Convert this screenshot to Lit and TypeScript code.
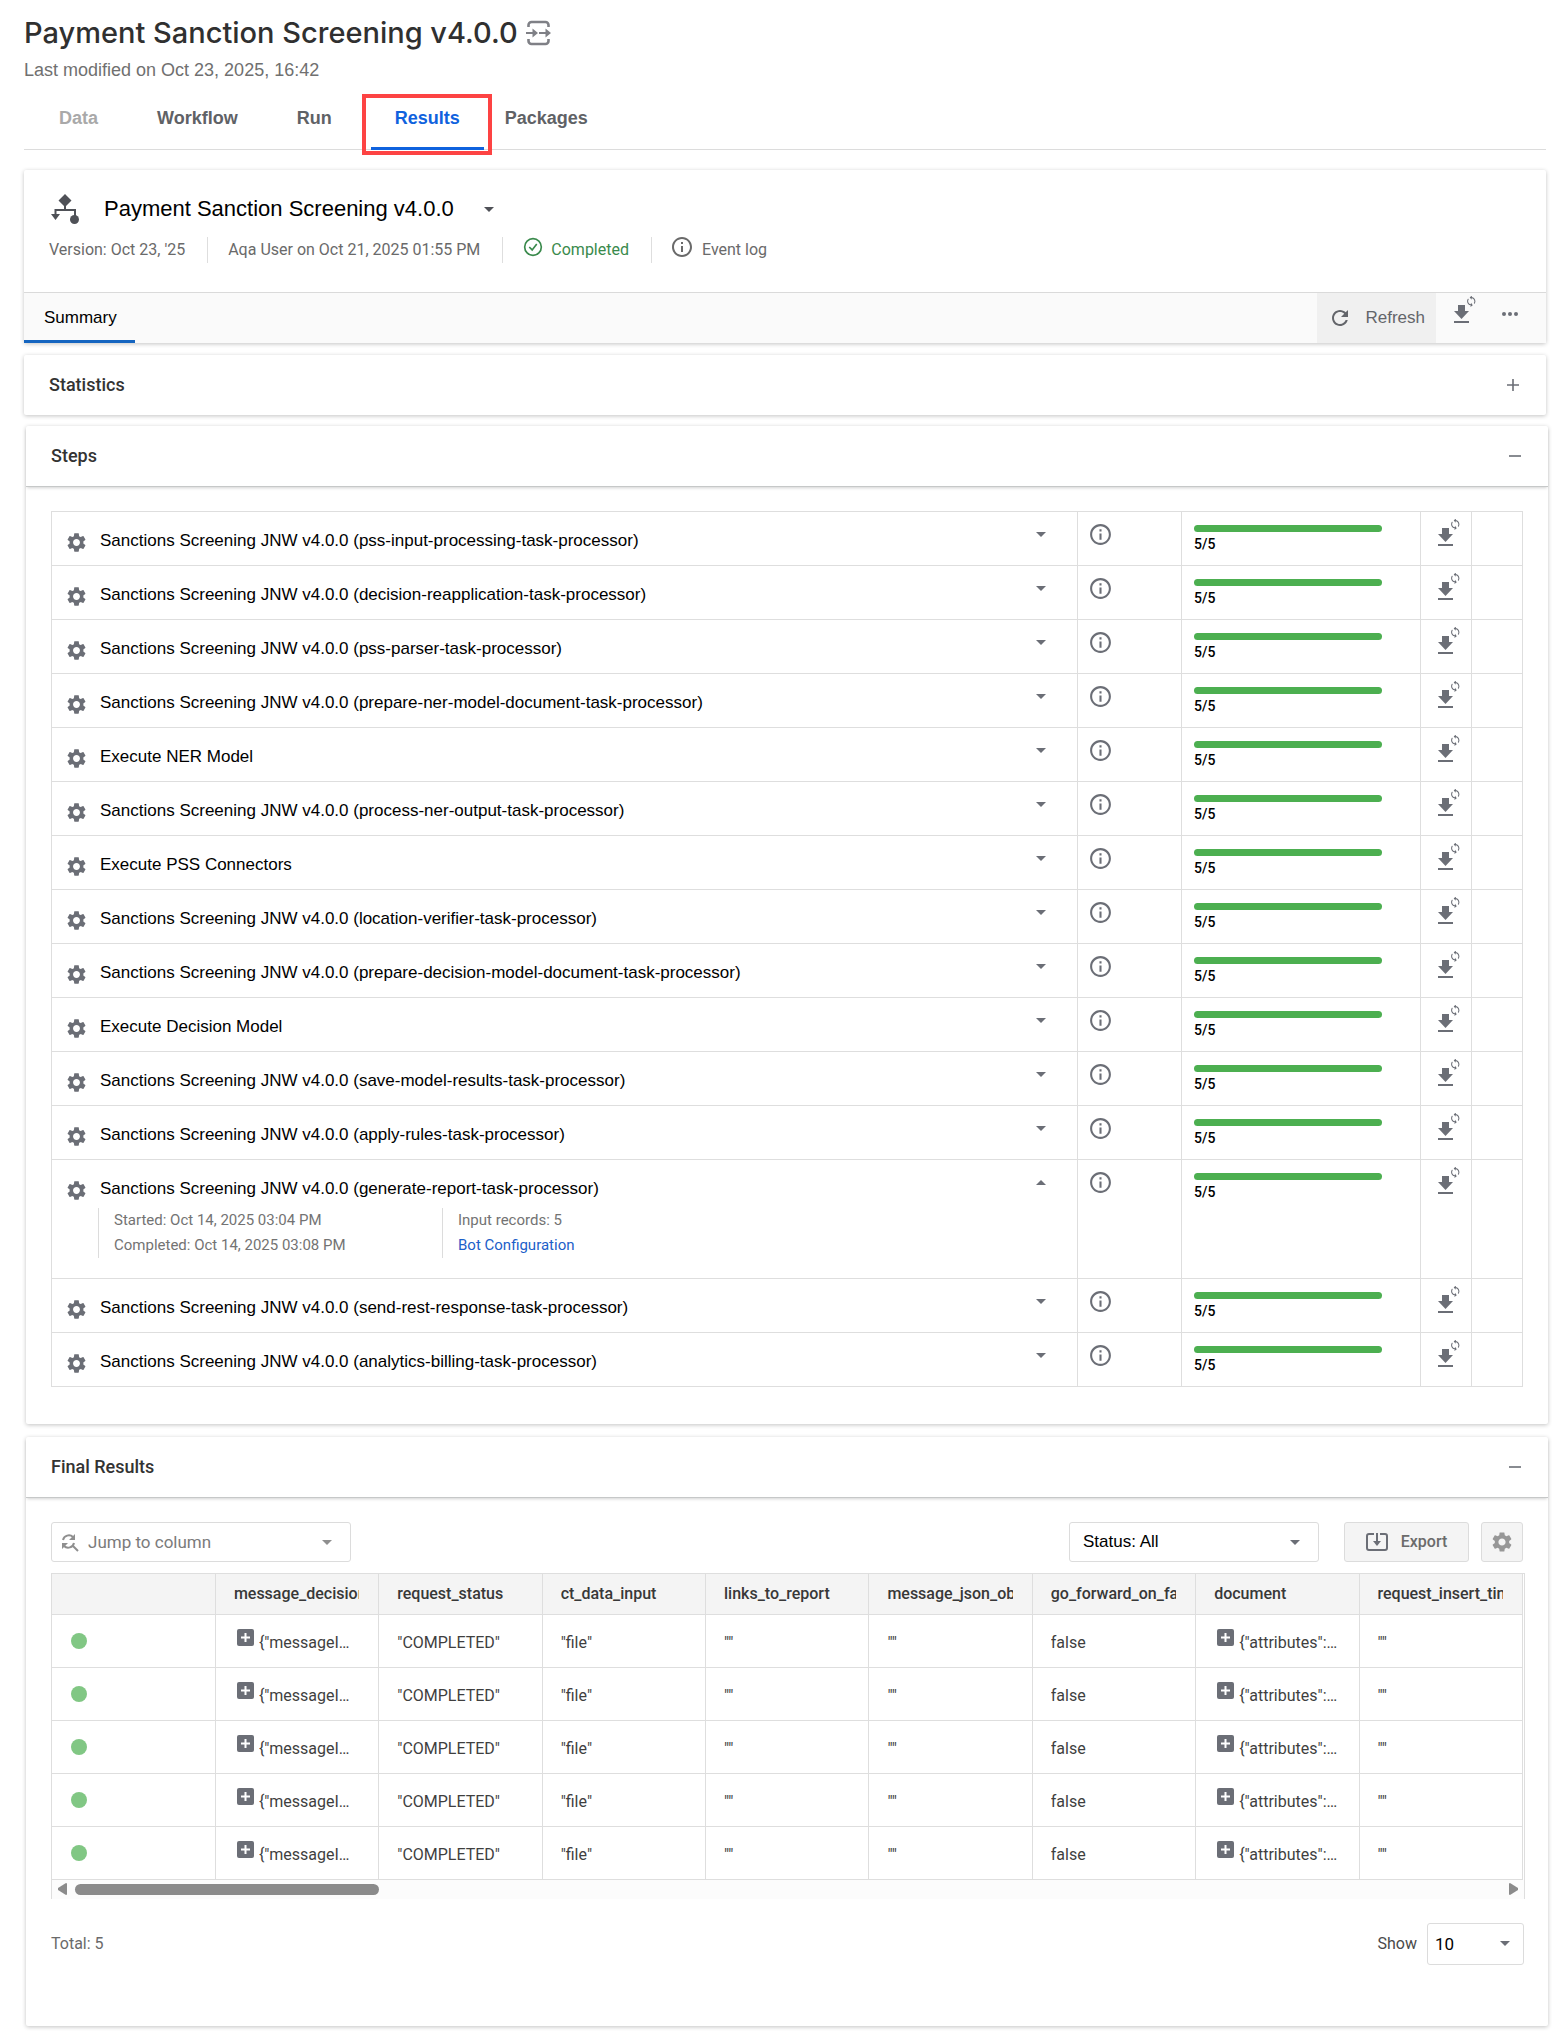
import { LitElement, html, css, svg, nothing } from "lit";
import { customElement } from "lit/decorators.js";

const svgIcon = (size: number, body: unknown, box = 24, cls = "icon") => html`<svg
  class=${cls} width=${size} height=${size} viewBox="0 0 ${box} ${box}" aria-hidden="true">${body}</svg>`;

const GEAR = svg`<path fill="currentColor" d="M19.14 12.94c.04-.3.06-.61.06-.94 0-.32-.02-.64-.07-.94l2.03-1.58c.18-.14.23-.41.12-.61l-1.92-3.32c-.12-.22-.37-.29-.59-.22l-2.39.96c-.5-.38-1.03-.7-1.62-.94L14.4 2.81c-.04-.24-.24-.41-.48-.41h-3.84c-.24 0-.43.17-.47.41l-.36 2.54c-.59.24-1.13.57-1.62.94l-2.39-.96c-.22-.08-.47 0-.59.22L2.74 8.87c-.12.21-.08.47.12.61l2.03 1.58c-.05.3-.09.63-.09.94s.02.64.07.94l-2.03 1.58c-.18.14-.23.41-.12.61l1.92 3.32c.12.22.37.29.59.22l2.39-.96c.5.38 1.03.7 1.62.94l.36 2.54c.05.24.24.41.48.41h3.84c.24 0 .44-.17.47-.41l.36-2.54c.59-.24 1.13-.56 1.62-.94l2.39.96c.22.08.47 0 .59-.22l1.92-3.32c.12-.22.07-.47-.12-.61l-2.01-1.58zM12 15.6c-1.98 0-3.6-1.62-3.6-3.6s1.62-3.6 3.6-3.6 3.6 1.62 3.6 3.6-1.62 3.6-3.6 3.6z"/>`;
const INFO = svg`<path fill="currentColor" d="M11 7h2v2h-2zm0 4h2v6h-2zm1-9C6.48 2 2 6.48 2 12s4.480 10 10 10 10-4.480 10-10S17.520 2 12 2zm0 18c-4.410 0-8-3.590-8-8s3.590-8 8-8 8 3.590 8 8-3.590 8-8 8z"/>`;
const CHECK = svg`<circle cx="12" cy="12" r="10" fill="none" stroke="currentColor" stroke-width="2"/><path d="M7.500 12l3.500 3.500 5.500-7" fill="none" stroke="currentColor" stroke-width="2"/>`;
const REFRESH = svg`<path fill="currentColor" d="M17.650 6.350C16.200 4.900 14.210 4 12 4c-4.420 0-7.990 3.580-7.990 8s3.570 8 7.990 8c3.730 0 6.840-2.550 7.730-6h-2.080c-.82 2.330-3.040 4-5.650 4-3.310 0-6-2.690-6-6s2.690-6 6-6c1.660 0 3.140.69 4.220 1.780L13 11h7V4l-2.350 2.350z"/>`;
const SYNC = svg`<path fill="currentColor" d="M12 4V1L8 5l4 4V6c3.310 0 6 2.690 6 6 0 1.010-.25 1.970-.7 2.800l1.460 1.460C19.540 15.030 20 13.570 20 12c0-4.420-3.580-8-8-8zm0 14c-3.310 0-6-2.690-6-6 0-1.010.25-1.970.7-2.800L5.240 7.740C4.460 8.970 4 10.430 4 12c0 4.420 3.580 8 8 8v3l4-4-4-4v3z"/>`;

const caret = (up = false) => html`<svg class="caret" width="10" height="5" viewBox="0 0 10 5" aria-hidden="true">
  <path fill="currentColor" d=${up ? "M0 5L5 0l5 5z" : "M0 0l5 5 5-5z"}/></svg>`;

const downloadSync = html`<svg width="24" height="28" viewBox="0 0 24 28" aria-hidden="true">
  <path fill="currentColor" d="M4 9h7v6h4l-7.500 8L0 15h4zM0 25h15v2H0z"/>
  <g transform="translate(11 -1) scale(.52)"><g transform="rotate(8 12 12)">${SYNC}</g></g>
</svg>`;

const P = "Sanctions Screening JNW v4.0.0 ";
const STEPS = [
  P + "(pss-input-processing-task-processor)",
  P + "(decision-reapplication-task-processor)",
  P + "(pss-parser-task-processor)",
  P + "(prepare-ner-model-document-task-processor)",
  "Execute NER Model",
  P + "(process-ner-output-task-processor)",
  "Execute PSS Connectors",
  P + "(location-verifier-task-processor)",
  P + "(prepare-decision-model-document-task-processor)",
  "Execute Decision Model",
  P + "(save-model-results-task-processor)",
  P + "(apply-rules-task-processor)",
  P + "(generate-report-task-processor)",
  P + "(send-rest-response-task-processor)",
  P + "(analytics-billing-task-processor)",
];
const OPEN_STEP = 12;

const COLUMNS = ["message_decision", "request_status", "ct_data_input", "links_to_report",
  "message_json_object", "go_forward_on_failure", "document", "request_insert_time"];
const RECORD = ['{"messageI…', '"COMPLETED"', '"file"', '""', '""', "false", '{"attributes":…', '""'];

@customElement("app-root")
export class AppRoot extends LitElement {
  static styles = css`
    :host { display: block; background: #fff; color: #000; padding: 13px 16px 6px 24px;
      font-family: "Liberation Sans", Arial, sans-serif; font-size: 17px; line-height: 20px; }
    * { box-sizing: border-box; }
    button, select { font: inherit; color: inherit; margin: 0; padding: 0; border: 0; background: none; }
    svg { display: block; flex: none; }
    h1, h2, h3, p { margin: 0; font-weight: 400; }

    .page-title { display: flex; align-items: center; gap: 8px; }
    .page-title h1 { font: 500 29px/40px Inter, Lato, sans-serif; color: #303030; }
    .page-title button { color: #7f8086; }
    .modified { font-size: 18px; line-height: 24px; color: #707070; padding-top: 5px; }

    .tabs { display: flex; gap: 11px; margin-top: 12px; padding-left: 11px; border-bottom: 1px solid #dcdcdc; height: 56px; }
    .tab { font-weight: 700; font-size: 18px; padding: 0 24px 8px; height: 56px; color: #5f6266; }
    .tab.disabled { color: #a9a9a9; }
    .tab.selected { position: relative; color: #0f62de; padding-bottom: 5px; border-bottom: 3px solid #0f62de; margin: 0 -14px 0 4px; }
    .tab.selected::after { content: ""; position: absolute; inset: 0 -8px -8px -9px; border: 4px solid #fd4343; }

    .card { background: #fff; box-shadow: 0 1px 4px rgba(0, 0, 0, .24); border-radius: 2px; }
    .run { margin-top: 20px; }
    .run-head { height: 122px; padding: 24px 25px 0; }
    .run-name { display: flex; align-items: center; height: 30px; color: #4f5157; }
    .run-name h2 { font-size: 22px; line-height: 30px; color: #000; margin: 0 30px 0 25px; }
    .meta { display: flex; align-items: center; height: 26px; margin-top: 13px; font: 16px/26px Roboto, sans-serif; color: #6a6a6a; }
    .meta > * { padding-right: 22px; margin-right: 20px; border-right: 1px solid #dedede; display: flex; align-items: center; gap: 8px; height: 26px; }
    .meta > :last-child { border: 0; }
    .meta svg { margin-bottom: 6px; }
    .meta .done { color: #3a8a4c; margin-right: 18px; }
    .bar { display: flex; height: 51px; background: #fafafa; border-top: 1px solid #dadada; }
    .summary { padding: 2px 18px 0 20px; border-bottom: 3px solid #1565c0; margin-right: auto; }
    .refresh { display: flex; align-items: center; gap: 13px; padding: 0 11px; background: #f0f0f0; color: #63656a; }
    .tool { display: flex; align-items: center; color: #6b6e76; }
    .bar .dl { padding: 0 24px 17px 18px; }
    .bar .more { padding: 0 28px 8px 0; }

    .panel-head { display: flex; justify-content: space-between; align-items: center; width: 100%; height: 60px; padding: 0 25px;
      font: 500 18px/24px Roboto, sans-serif; color: #333; text-align: left; }
    .panel-head svg { color: #6b6e76; margin-right: 2px; }
    .statistics { margin-top: 12px; }
    .wide { margin: 11px -2px 0 2px; }
    .wide .panel-head { box-shadow: 0 1px 0 #c6c8c8, 0 3px 3px -1px rgba(0, 0, 0, .18); }
    .panel-body { padding: 25px 25px 37px; }

    table { border-collapse: collapse; width: 100%; table-layout: fixed; }
    .steps td { border: 1px solid #dedede; height: 54px; padding: 0; vertical-align: top; }
    .col-info { width: 104px; } .col-progress { width: 239px; } .col-dl { width: 51px; }
    .step { display: flex; align-items: flex-start; padding: 19px 31px 0 13px; }
    .step svg { color: #6b6e76; }
    .step .name { flex: 1; padding-left: 12px; }
    .step .caret { margin: 1px 0; }
    .details { display: flex; margin: 6px 0 20px 46px; font: 15px/25px Roboto, sans-serif; color: #737373; }
    .details div { width: 344px; border-left: 1px solid #dcdcdc; padding-left: 15px; }
    .details a { color: #1c60c9; text-decoration: none; display: block; }
    .info { padding: 10px 0 0 10px; color: #6b6e76; display: block; }
    .progress { display: block; margin: 13px 38px 0 12px; height: 7px; border-radius: 4px; background: #4caf50; }
    .count { padding: 2px 0 0 12px; font: 500 14px/20px Roboto, sans-serif; }
    .cell-dl { display: block; padding: 7px 0 0 17px; color: #6b6e76; }

    .filters { display: flex; align-items: center; margin-bottom: 11px; }
    .select { position: relative; display: block; color: #6b6e76; }
    .select select { appearance: none; width: 100%; height: 40px; border: 1px solid #dcdcdc; border-radius: 3px; padding: 0 13px; font-size: 17px; color: #000; }
    .select .caret { position: absolute; right: 19px; top: 18px; }
    .select .lead { position: absolute; left: 10px; top: 11px; }
    .jump { width: 300px; margin-right: auto; color: #8f8f8f; }
    .jump select { padding-left: 36px; font: 17px/20px Roboto, sans-serif; color: #7b7b7b; }
    .status { width: 250px; margin-right: 25px; }
    .btn { display: flex; align-items: center; justify-content: center; gap: 13px; height: 40px; border: 1px solid #dcdcdc; border-radius: 3px;
      background: #f4f4f4; font: 500 16px/20px Roboto, sans-serif; color: #6b6b6b; }
    .export { width: 125px; margin-right: 12px; }
    .config { width: 42px; color: #979797; }

    .grid { border: 1px solid #dedede; border-bottom: 0; margin-right: -2px; }
    .results { width: calc(100% - 1px); font: 16px/20px Roboto, sans-serif; color: #3f3f3f; }
    .results th, .results td { padding: 0 19px 0 18px; border: 0 solid #dedede; border-width: 0 1px 1px 0; text-align: left; }
    .results th { height: 40px; background: #f4f4f4; font-weight: 500; color: #383838; }
    .results td { height: 53px; }
    .clip { overflow: hidden; white-space: nowrap; }
    .value { overflow: hidden; white-space: nowrap; text-overflow: ellipsis; padding-top: 5px; }
    .object { display: flex; gap: 5px; padding: 0 0 0 3px; align-items: flex-start; }
    .object .value { flex: 1; padding-top: 4px; }
    .object button { color: #6b6e76; }
    .dot { display: block; width: 16px; height: 16px; border-radius: 50%; background: #81c784; margin-left: 1px; }
    .scroll { display: flex; align-items: center; height: 19px; background: #fcfcfc; color: #8b8b8b; padding: 0 6px; }
    .thumb { width: 304px; height: 11px; border-radius: 6px; background: #8b8b8b; margin: 0 auto 0 8px; }
    .foot { display: flex; align-items: center; justify-content: space-between; margin: 24px -1px 0 0; font: 16px/20px Roboto, sans-serif; color: #6a6a6a; }
    .show { display: flex; align-items: center; gap: 10px; color: #4a4a4a; }
    .size { width: 97px; }
    .size select { height: 42px; padding: 0 7px; }
    .size .caret { right: 14px; }
    .final { margin-top: 13px; }
    .final .panel-body { padding-bottom: 61px; }
  `;

  private panelHead(title: string, open: boolean) {
    return html`<button class="panel-head" aria-expanded=${open}>${title}
      <svg width="12" height="12" viewBox="0 0 12 12" aria-hidden="true"><path d=${open ? "M0 6h12" : "M0 6h12M6 0v12"} stroke="currentColor" stroke-width="1.600"/></svg>
    </button>`;
  }

  private stepRow(name: string, i: number) {
    const open = i === OPEN_STEP;
    return html`<tr>
      <td>
        <div class="step">${svgIcon(23, GEAR)}<span class="name">${name}</span>
          <button aria-label="Toggle details" aria-expanded=${open}>${caret(open)}</button></div>
        ${open ? html`<div class="details">
          <div>Started: Oct 14, 2025 03:04 PM<br>Completed: Oct 14, 2025 03:08 PM</div>
          <div>Input records: 5<a href="#bot">Bot Configuration</a></div>
        </div>` : nothing}
      </td>
      <td><button class="info" aria-label="Step info">${svgIcon(25, INFO)}</button></td>
      <td><span class="progress"></span><p class="count">5/5</p></td>
      <td><button class="cell-dl" aria-label="Download step results">${downloadSync}</button></td>
      <td></td>
    </tr>`;
  }

  private cell(value: string) {
    if (!value.startsWith("{")) return html`<div class="value">${value}</div>`;
    return html`<div class="object">
      <button aria-label="Expand value"><svg width="17" height="17" viewBox="0 0 17 17"><rect width="17" height="17" rx="2" fill="currentColor"/><path d="M8.500 4v9M4 8.500h9" stroke="#fff" stroke-width="2"/></svg></button>
      <div class="value">${value}</div></div>`;
  }

  render() {
    return html`
      <header>
        <div class="page-title">
          <h1>Payment Sanction Screening v4.0.0</h1>
          <button aria-label="Switch workflow"><svg width="25" height="26" viewBox="0 0 25 26" fill="none" stroke="currentColor" stroke-width="2.600">
            <path d="M2.500 7V5a3 3 0 0 1 3-3h14a3 3 0 0 1 3 3v2M2.500 19v2a3 3 0 0 0 3 3h14a3 3 0 0 0 3-3v-2"/>
            <path d="M0 13h8M13 13h8" stroke-width="2"/><path d="M6.500 8.500L12 13l-5.500 4.500zM19.500 8.500L25 13l-5.500 4.500z" fill="currentColor" stroke="none"/></svg></button>
        </div>
        <p class="modified">Last modified on Oct 23, 2025, 16:42</p>
      </header>
      <nav class="tabs" role="tablist">
        <button class="tab disabled" role="tab">Data</button>
        <button class="tab" role="tab">Workflow</button>
        <button class="tab" role="tab">Run</button>
        <button class="tab selected" role="tab" aria-selected="true">Results</button>
        <button class="tab" role="tab">Packages</button>
      </nav>

      <section class="card run">
        <div class="run-head">
          <div class="run-name">
            <svg width="30" height="30" viewBox="-1 0 30 30" fill="currentColor" aria-hidden="true">
              <path d="M15 0l6.500 6.500L15 13 8.500 6.500zM1 20h9l-4.500 6zM14 11h2v4h10v7h-2v-5H6.500v4h-2v-6H14z"/><circle cx="24.500" cy="25.500" r="4.500"/></svg>
            <h2>Payment Sanction Screening v4.0.0</h2>
            <button aria-label="Choose run">${caret()}</button>
          </div>
          <div class="meta">
            <span>Version: Oct 23, '25</span>
            <span>Aqa User on Oct 21, 2025 01:55 PM</span>
            <span class="done">${svgIcon(20, CHECK)}Completed</span>
            <button>${svgIcon(24, INFO)}Event log</button>
          </div>
        </div>
        <div class="bar">
          <button class="summary">Summary</button>
          <button class="refresh">${svgIcon(24, REFRESH)}<span>Refresh</span></button>
          <button class="tool dl" aria-label="Download">${downloadSync}</button>
          <button class="tool more" aria-label="More actions"><svg width="16" height="4" viewBox="0 0 16 4" fill="currentColor"><circle cx="2" cy="2" r="2"/><circle cx="8" cy="2" r="2"/><circle cx="14" cy="2" r="2"/></svg></button>
        </div>
      </section>

      <section class="card statistics">${this.panelHead("Statistics", false)}</section>

      <section class="card wide">
        ${this.panelHead("Steps", true)}
        <div class="panel-body">
          <table class="steps">
            <colgroup><col><col class="col-info"><col class="col-progress"><col class="col-dl"><col class="col-dl"></colgroup>
            <tbody>${STEPS.map((s, i) => this.stepRow(s, i))}</tbody>
          </table>
        </div>
      </section>

      <section class="card wide final">
        ${this.panelHead("Final Results", true)}
        <div class="panel-body">
          <div class="filters">
            <label class="select jump">
              <svg class="lead" width="20" height="20" viewBox="0 0 20 20" fill="none" stroke="currentColor" stroke-width="2" aria-hidden="true">
                <path d="M2 7a6 6 0 0 1 10-3M13 10a6 6 0 0 1-10 3M11 12l6 6"/><path d="M14 1v6H8zM1 16v-6h6z" fill="currentColor" stroke="none"/></svg>
              <select aria-label="Jump to column"><option>Jump to column</option></select>${caret()}
            </label>
            <label class="select status"><select aria-label="Status"><option>Status: All</option></select>${caret()}</label>
            <button class="btn export"><svg width="22" height="18" viewBox="0 0 22 18" fill="none" stroke="#6b6e76" stroke-width="2" aria-hidden="true">
              <path d="M8 1H3a2 2 0 0 0-2 2v12a2 2 0 0 0 2 2h16a2 2 0 0 0 2-2V3a2 2 0 0 0-2-2h-5M11 0v10"/><path d="M7 8h8l-4 5z" fill="#6b6e76" stroke="none"/></svg>Export</button>
            <button class="btn config" aria-label="Table settings">${svgIcon(24, GEAR)}</button>
          </div>
          <div class="grid">
            <table class="results">
              <thead><tr><th></th>${COLUMNS.map((c) => html`<th><div class="clip">${c}</div></th>`)}</tr></thead>
              <tbody>${[0, 1, 2, 3, 4].map(() => html`<tr><td><span class="dot"></span></td>${RECORD.map((v) => html`<td>${this.cell(v)}</td>`)}</tr>`)}</tbody>
            </table>
            <div class="scroll">
              <svg width="9" height="12" viewBox="0 0 9 12" fill="currentColor"><path d="M9 1v10q0 1-1 1L0 7V5l8-5q1 0 1 1z"/></svg>
              <span class="thumb"></span>
              <svg width="9" height="12" viewBox="0 0 9 12" fill="currentColor"><path d="M0 1v10q0 1 1 1l8-5V5L1 0Q0 0 0 1z"/></svg>
            </div>
          </div>
          <div class="foot">
            <span>Total: 5</span>
            <div class="show"><label for="page-size">Show</label>
              <div class="select size"><select id="page-size"><option>10</option></select>${caret()}</div></div>
          </div>
        </div>
      </section>`;
  }
}
